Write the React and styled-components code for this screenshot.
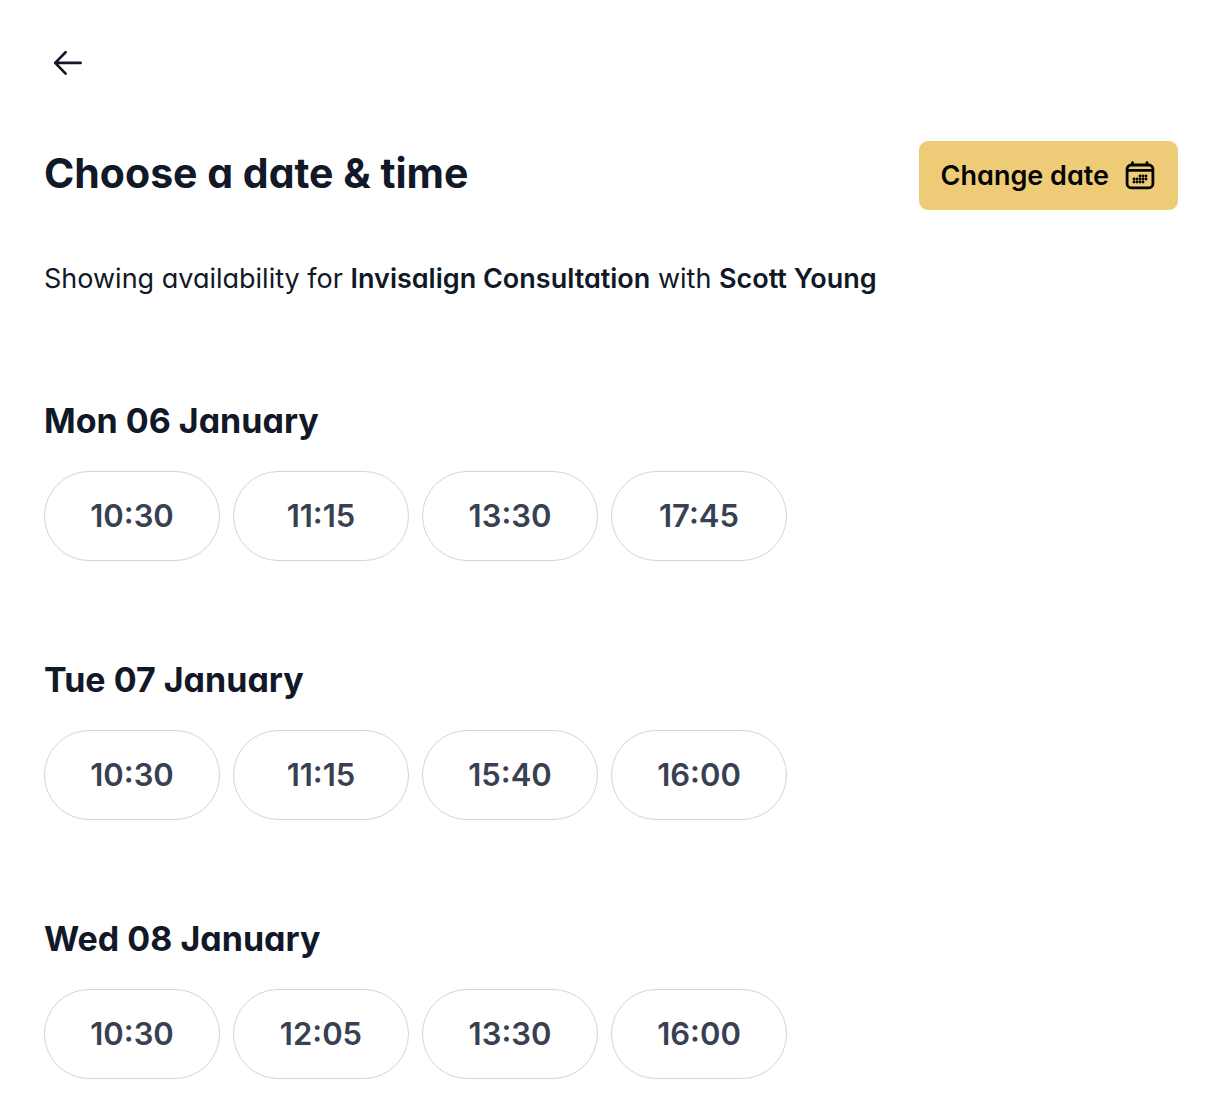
import React from "react";
import styled, { createGlobalStyle } from "styled-components";

const GlobalStyle = createGlobalStyle`
  *, *::before, *::after { box-sizing: border-box; }
  body {
    margin: 0;
    background: #ffffff;
    color: #111827;
    font-family: Inter, "Liberation Sans", sans-serif;
    font-feature-settings: "cv11" 1;
  }
  button { font: inherit; font-feature-settings: inherit; }
`;

const Page = styled.main`
  padding: 40px 28px 36px 44px;
`;

const BackButton = styled.button`
  display: flex;
  padding: 0 7px;
  border: 0;
  background: transparent;
  color: #111827;
  cursor: pointer;
`;

const Header = styled.header`
  display: flex;
  align-items: flex-start;
  justify-content: space-between;
  gap: 24px;
  margin-top: 56px;
`;

const Title = styled.h1`
  margin: 0;
  font-size: 41px;
  line-height: 64px;
  font-weight: 700;
`;

const ChangeDateButton = styled.button`
  display: flex;
  align-items: center;
  gap: 15px;
  height: 69px;
  padding: 0 22px;
  border: 0;
  border-radius: 9px;
  background: #eecc77;
  color: #050505;
  font-size: 27px;
  line-height: 40px;
  font-weight: 600;
  cursor: pointer;
`;

const Summary = styled.p`
  margin: 49px 0 0;
  font-size: 27px;
  line-height: 40px;
  font-weight: 400;

  strong { font-weight: 600; }
`;

const Days = styled.div`
  display: grid;
  gap: 93px;
  margin-top: 96px;
`;

const DayHeading = styled.h2`
  margin: 0 0 24px;
  font-size: 34px;
  line-height: 52px;
  font-weight: 700;
`;

const Slots = styled.div`
  display: flex;
  flex-wrap: wrap;
  gap: 13px;
`;

const Slot = styled.button`
  width: 176px;
  height: 90px;
  padding: 0;
  border: 1px solid #d1d5db;
  border-radius: 45px;
  background: #ffffff;
  color: #374151;
  font-size: 31px;
  line-height: 44px;
  font-weight: 600;
  cursor: pointer;
`;

const days = [
  { label: "Mon 06 January", times: ["10:30", "11:15", "13:30", "17:45"] },
  { label: "Tue 07 January", times: ["10:30", "11:15", "15:40", "16:00"] },
  { label: "Wed 08 January", times: ["10:30", "12:05", "13:30", "16:00"] },
];

const calendarDots = [
  [16, 16], [19, 16], [22, 16],
  [10, 19], [13, 19], [16, 19], [19, 19], [22, 19],
  [10, 22], [13, 22], [16, 22], [19, 22],
];

function ArrowIcon() {
  return (
    <svg width="34" height="45" viewBox="0 0 34 45" fill="none" stroke="currentColor" strokeWidth="2.7" strokeLinecap="round" strokeLinejoin="round" aria-hidden="true">
      <path d="M14.6 12.2 L4.2 22.9 L14.6 33.6 M4.2 22.9 H29.6" />
    </svg>
  );
}

function CalendarIcon() {
  return (
    <svg width="32" height="31" viewBox="0 0 32 31" fill="none" stroke="currentColor" strokeWidth="2.8" strokeLinecap="round" aria-hidden="true">
      <rect x="3.1" y="5" width="25.8" height="22.8" rx="4" />
      <path d="M3.5 10.4H28.5M8.5 2.6V4.5M23 2.6V4.5" />
      <g fill="currentColor" stroke="none">
        {calendarDots.map(([x, y]) => (
          <circle key={`${x}-${y}`} cx={x} cy={y} r="1.45" />
        ))}
      </g>
    </svg>
  );
}

export default function App() {
  return (
    <>
      <GlobalStyle />
      <Page>
        <BackButton type="button" aria-label="Back"><ArrowIcon /></BackButton>
        <Header>
          <Title>Choose a date &amp; time</Title>
          <ChangeDateButton type="button">Change date<CalendarIcon /></ChangeDateButton>
        </Header>
        <Summary>
          Showing availability for <strong>Invisalign Consultation</strong> with <strong>Scott Young</strong>
        </Summary>
        <Days>
          {days.map((day) => (
            <section key={day.label}>
              <DayHeading>{day.label}</DayHeading>
              <Slots>
                {day.times.map((time) => (
                  <Slot key={time} type="button">{time}</Slot>
                ))}
              </Slots>
            </section>
          ))}
        </Days>
      </Page>
    </>
  );
}
